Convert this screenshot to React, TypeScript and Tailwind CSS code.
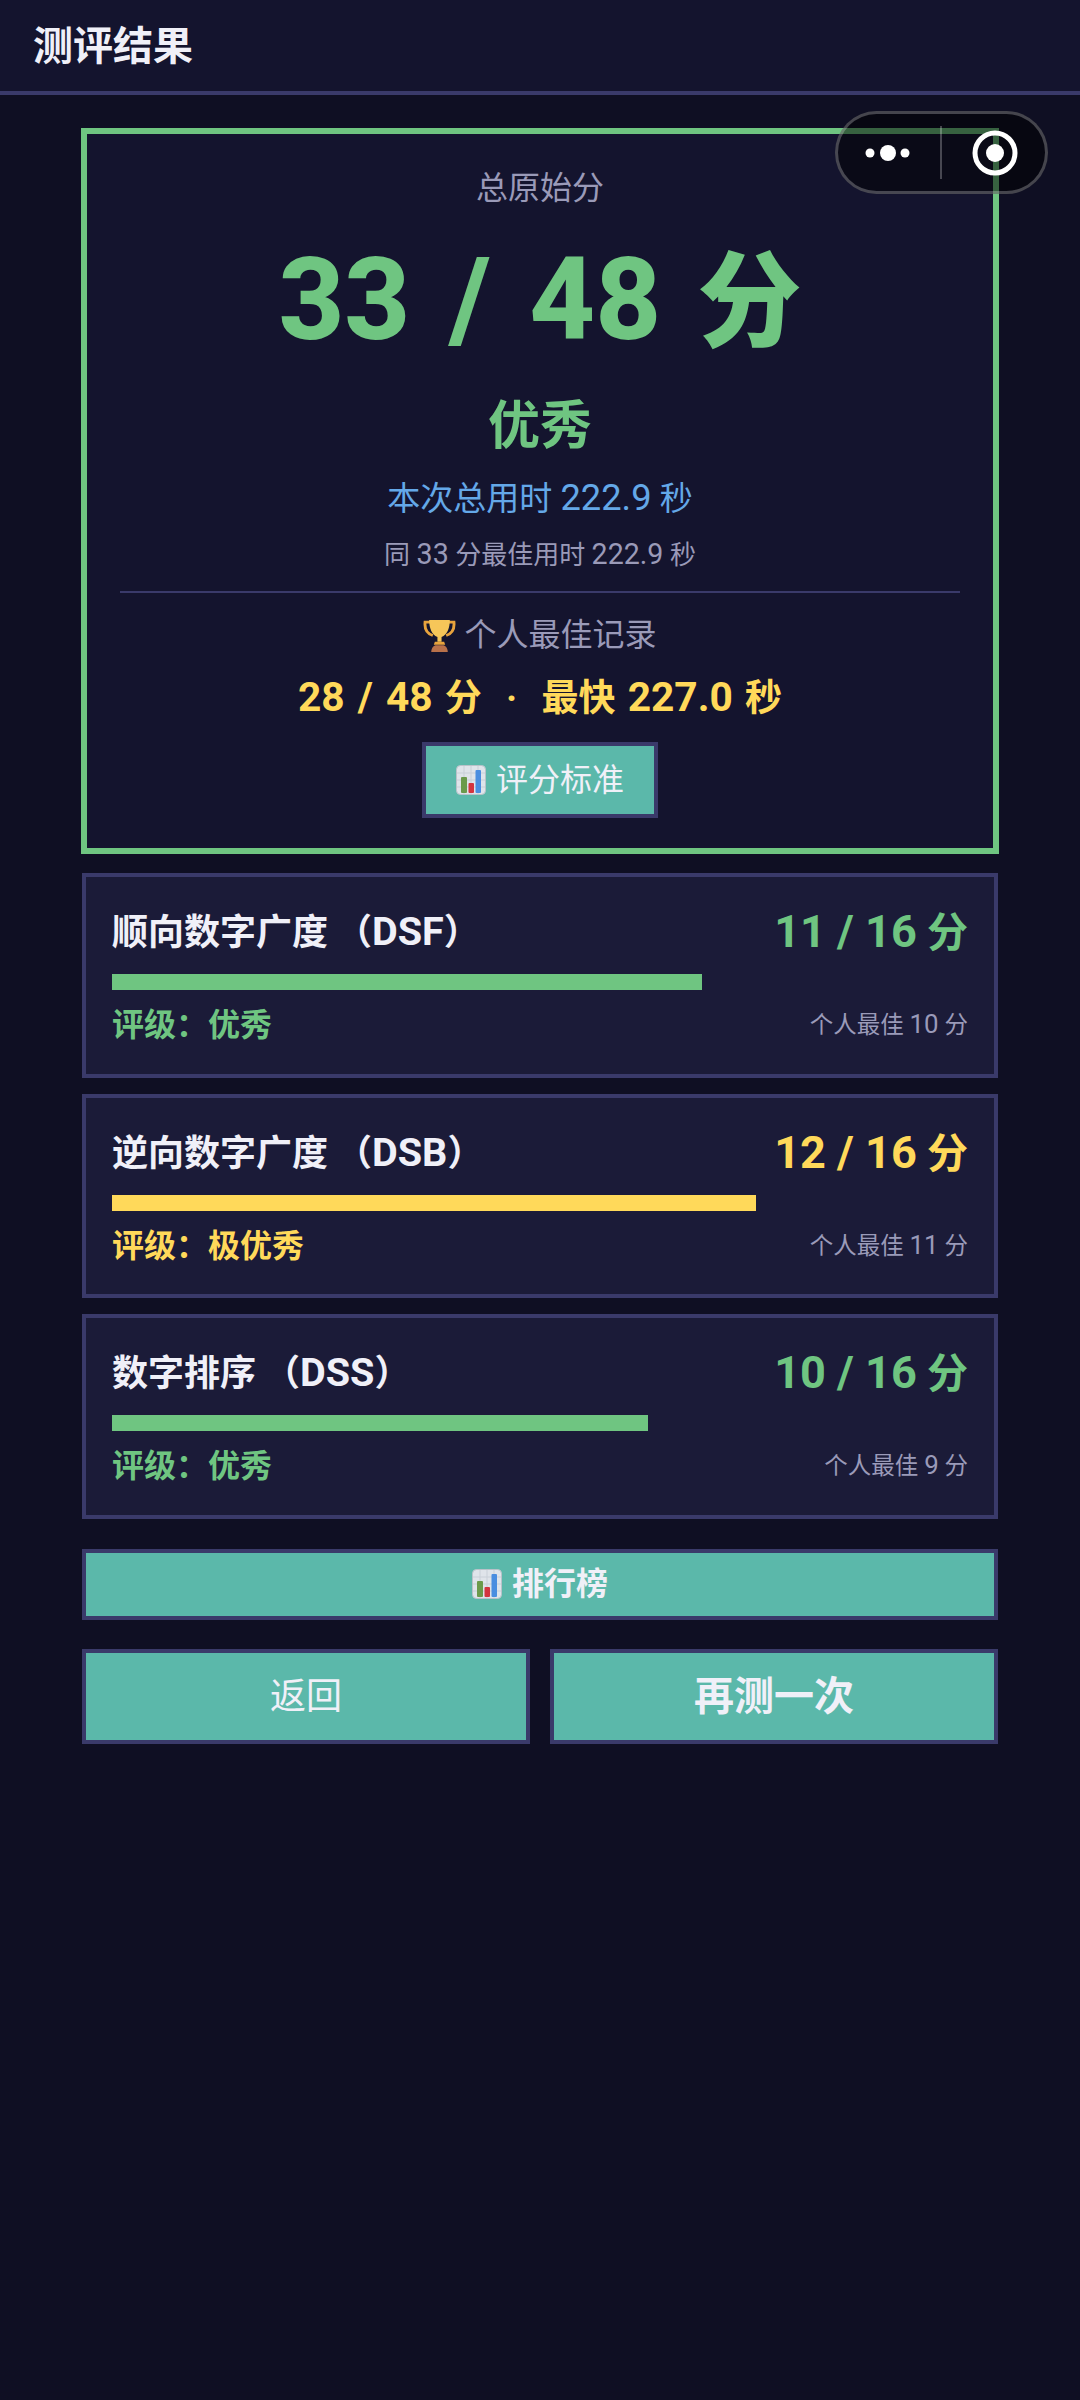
import React from 'react';

// latin digits in the reference run a bit larger than the CJK around them
const Num = ({ children }: { children: React.ReactNode }) => (
  <span className="text-[1.1em] leading-none">{children}</span>
);

const ChartIcon = () => (
  <svg width="30" height="30" viewBox="0 0 30 30" className="shrink-0">
    <rect x="0.5" y="0.5" width="29" height="29" rx="4" fill="#dfe4ea" stroke="#b9c2c9" />
    <path d="M1 8h28M1 15h28M1 22h28M8 1v28M15 1v28M22 1v28" stroke="#c9d0d8" strokeWidth="1" />
    <rect x="5" y="12" width="6" height="16" rx="1" fill="#6b9a4b" />
    <rect x="12.500" y="18" width="5.500" height="10" rx="1" fill="#d4343f" />
    <rect x="19.500" y="5" width="5.500" height="23" rx="1" fill="#4a8ee0" />
  </svg>
);

const TrophyIcon = () => (
  <svg width="33" height="33" viewBox="0 0 32 32" className="shrink-0">
    <path d="M7 3H2c-.6 6 1.500 11 7.500 13M25 3h5c.6 6-1.500 11-7.500 13" fill="none" stroke="#e8a33d" strokeWidth="2.800" />
    <path d="M6 1h20c0 8-2.500 14-8 16.500V22h-4v-4.500C8.500 15 6 9 6 1z" fill="#f6c659" />
    <path d="M11.500 22h9l1 3h-11z" fill="#e8a33d" />
    <path d="M8 32c0-4 2.500-6.500 5-6.500h6c2.500 0 5 2.500 5 6.500z" fill="#b9714a" />
  </svg>
);

const CapsuleMenu = () => (
  <div className="absolute left-[835px] top-[111px] z-10 h-[83px] w-[213px] rounded-full border-[3px] border-white/25 bg-black/50">
    <svg width="213" height="83" viewBox="0 0 213 83" className="absolute -left-[3px] -top-[3px]">
      <circle cx="35" cy="42" r="4.500" fill="#fff" />
      <circle cx="53" cy="42" r="8" fill="#fff" />
      <circle cx="70" cy="42" r="4.500" fill="#fff" />
      <rect x="105" y="15" width="2" height="53" fill="#ffffff" fillOpacity="0.25" />
      <circle cx="160" cy="42" r="20" fill="none" stroke="#fff" strokeWidth="5" />
      <circle cx="160" cy="42" r="9" fill="#fff" />
    </svg>
  </div>
);

const tests = [
  { name: '顺向数字广度', code: 'DSF', score: 11, level: '优秀', best: 10, gold: false },
  { name: '逆向数字广度', code: 'DSB', score: 12, level: '极优秀', best: 11, gold: true },
  { name: '数字排序', code: 'DSS', score: 10, level: '优秀', best: 9, gold: false },
];

const TestCard = ({ name, code, score, level, best, gold }: (typeof tests)[number]) => (
  <div className="h-[204.5px] border-4 border-[#3a3a6a] bg-[#1b1b38] pl-[26px] pr-[26px] pt-[28px]">
    <div className="flex items-center justify-between">
      <span className="text-[36px] leading-[56px] font-bold text-[#f0f0f8]">
        {name}<span className="ml-[8px]">（</span><Num>{code}</Num>）
      </span>
      <span className={`text-[41px] leading-[56px] font-bold ${gold ? 'text-[#ffd95a]' : 'text-[#6fc581]'}`}>
        <Num>{score} / 16</Num> 分
      </span>
    </div>
    <div className="mt-[13px] -mr-[2px] h-[16px]">
      <div className={`h-full ${gold ? 'bg-[#ffd95a]' : 'bg-[#6fc581]'}`} style={{ width: `${(score / 16) * 100}%` }} />
    </div>
    <div className="mt-[13px] flex items-center justify-between">
      <span className={`text-[32px] leading-[44px] font-bold ${gold ? 'text-[#ffd95a]' : 'text-[#6fc581]'}`}>
        评级：{level}
      </span>
      <span className="text-[23.5px] leading-[44px] text-[#9a9ab8]">
        个人最佳 <Num>{best}</Num> 分
      </span>
    </div>
  </div>
);

export default function App() {
  return (
    <div className="relative min-h-[2400px] bg-[#0f0f23] font-['Roboto','Noto_Sans_CJK_SC',sans-serif]">
      <header className="flex h-[95px] items-center border-b-4 border-[#3a3a6a] bg-[#14142e] pl-[33px] pt-[2px]">
        <h1 className="text-[40px] leading-[56px] font-bold text-[#f0f0f8]">测评结果</h1>
      </header>
      <CapsuleMenu />

      <main className="px-[82px]">
        {/* total score */}
        <section className="-mx-px mt-[33px] flex h-[726px] flex-col items-center border-[6px] border-[#6fc581] bg-[#14142e] px-[33px] pt-[34px]">
          <div className="text-[32px] leading-[40px] text-[#9a9ab8]">总原始分</div>
          <div className="mt-[34px] text-[104px] leading-[124px] font-extrabold [word-spacing:0.1em] text-[#6fc581]">
            <Num>33 / 48</Num> 分
          </div>
          <div className="mt-[31px] text-[52px] leading-[60px] font-bold text-[#6fc581]">优秀</div>
          <div className="mt-[20px] text-[33px] leading-[44px] text-[#64a8e8]">
            本次总用时 <Num>222.9</Num> 秒
          </div>
          <div className="mt-[16px] text-[26px] leading-[36px] text-[#9a9ab8]">
            同 <Num>33</Num> 分最佳用时 <Num>222.9</Num> 秒
          </div>
          <div className="mt-[18px] h-[2px] w-full bg-[#3a3a6a]" />
          <div className="mt-[20px] flex items-center gap-[8px] text-[32px] leading-[44px] text-[#9a9ab8]">
            <TrophyIcon />
            个人最佳记录
          </div>
          <div className="mt-[16px] text-[37px] leading-[52px] font-bold whitespace-pre [word-spacing:0.08em] text-[#ffd95a]">
            <Num>28 / 48</Num> 分  ·  最快 <Num>227.0</Num> 秒
          </div>
          <button className="mt-[17px] flex h-[76px] w-[236px] items-center justify-center gap-[10px] border-4 border-[#3a3a6a] bg-[#5bb8aa] text-[32px] text-[#f0f0f8]">
            <ChartIcon />
            评分标准
          </button>
        </section>

        <section className="mt-[19px] flex flex-col gap-[16px]">
          {tests.map((t) => (
            <TestCard key={t.name} {...t} />
          ))}
        </section>

        <button className="mt-[30px] flex h-[71px] w-full items-center justify-center gap-[10px] border-4 border-[#3a3a6a] bg-[#5bb8aa] text-[32px] font-bold text-[#f0f0f8]">
          <ChartIcon />
          排行榜
        </button>

        <div className="mt-[29px] grid grid-cols-2 gap-[20px]">
          <button className="h-[95px] border-4 border-[#3a3a6a] bg-[#5bb8aa] pt-[2px] text-[36px] text-[#f0f0f8]">返回</button>
          <button className="h-[95px] border-4 border-[#3a3a6a] bg-[#5bb8aa] pt-[2px] text-[40px] font-bold text-[#f0f0f8]">再测一次</button>
        </div>
      </main>
    </div>
  );
}
